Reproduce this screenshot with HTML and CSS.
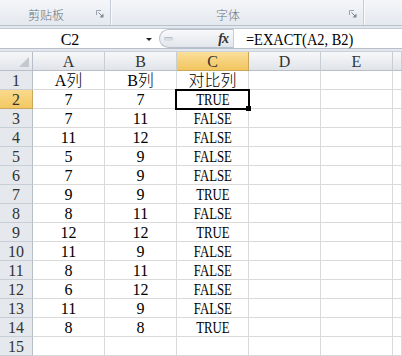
FILE: index.html
```html
<!DOCTYPE html>
<html lang="zh-CN">
<head>
  <meta charset="UTF-8" />
  <title>EXACT 对比</title>
  <link rel="stylesheet" href="styles.css">
</head>
<body>
  <div class="ribbon">
    <div class="group clip">
      <span class="label">剪贴板</span>
      <svg class="launcher" width="8" height="8" viewBox="0 0 8 8">
        <path d="M0.5 5V0.5H5" fill="none" stroke="#9aa4b0" />
        <path d="M2.5 2.5L6 6" stroke="#7d8895" />
        <path d="M3.5 7.5H7.5V3.5Z" fill="#7d8895" />
      </svg>
    </div>
    <div class="group font">
      <span class="label">字体</span>
      <svg class="launcher" width="8" height="8" viewBox="0 0 8 8">
        <path d="M0.5 5V0.5H5" fill="none" stroke="#9aa4b0" />
        <path d="M2.5 2.5L6 6" stroke="#7d8895" />
        <path d="M3.5 7.5H7.5V3.5Z" fill="#7d8895" />
      </svg>
    </div>
    <div class="group rest"></div>
  </div>

  <div class="fbar">
    <div class="namebox">
      <span class="name">C2</span>
      <span class="drop"></span>
    </div>
    <div class="fxbox">
      <span class="dimple"></span>
      <span class="fx">fx</span>
    </div>
    <div class="formula"><span class="ftext">=EXACT(A2, B2)</span></div>
  </div>

  <div class="sheet">
    <div class="corner">
      <svg width="10" height="10" viewBox="0 0 10 10"><path d="M10 0V10H0Z" fill="#c3c8cf" /></svg>
    </div>
    <div class="ch">A</div><div class="ch">B</div><div class="ch sel">C</div><div class="ch">D</div><div class="ch">E</div><div class="ch"></div>

    <div class="rh">1</div><div>A<span class="zh">列</span></div><div>B<span class="zh">列</span></div><div><span class="zh">对比列</span></div><div></div><div></div><div></div>
    <div class="rh sel">2</div><div>7</div><div>7</div><div class="act"><span class="b">TRUE</span><span class="handle"></span></div><div></div><div></div><div></div>
    <div class="rh">3</div><div>7</div><div>11</div><div><span class="b">FALSE</span></div><div></div><div></div><div></div>
    <div class="rh">4</div><div>11</div><div>12</div><div><span class="b">FALSE</span></div><div></div><div></div><div></div>
    <div class="rh">5</div><div>5</div><div>9</div><div><span class="b">FALSE</span></div><div></div><div></div><div></div>
    <div class="rh">6</div><div>7</div><div>9</div><div><span class="b">FALSE</span></div><div></div><div></div><div></div>
    <div class="rh">7</div><div>9</div><div>9</div><div><span class="b">TRUE</span></div><div></div><div></div><div></div>
    <div class="rh">8</div><div>8</div><div>11</div><div><span class="b">FALSE</span></div><div></div><div></div><div></div>
    <div class="rh">9</div><div>12</div><div>12</div><div><span class="b">TRUE</span></div><div></div><div></div><div></div>
    <div class="rh">10</div><div>11</div><div>9</div><div><span class="b">FALSE</span></div><div></div><div></div><div></div>
    <div class="rh">11</div><div>8</div><div>11</div><div><span class="b">FALSE</span></div><div></div><div></div><div></div>
    <div class="rh">12</div><div>6</div><div>12</div><div><span class="b">FALSE</span></div><div></div><div></div><div></div>
    <div class="rh">13</div><div>11</div><div>9</div><div><span class="b">FALSE</span></div><div></div><div></div><div></div>
    <div class="rh">14</div><div>8</div><div>8</div><div><span class="b">TRUE</span></div><div></div><div></div><div></div>
    <div class="rh">15</div><div></div><div></div><div></div><div></div><div></div><div></div>
  </div>
</body>
</html>
```

FILE: styles.css
```css
body {
  margin: 0;
  background: #e3e8ee;
  font-family: "Liberation Serif", "Noto Sans CJK SC", serif;
  overflow: hidden;
}

/* ribbon */
.ribbon {
  display: flex;
  height: 25px;
  background: linear-gradient(#f4f6f9, #e4e9ef);
  border-bottom: 1px solid #b9c1cb;
}

.group {
  display: flex;
  align-items: center;
  border-right: 1px solid #c6cdd6;
  box-shadow: 1px 0 0 #f7f9fb;
}

.clip {
  width: 110px;
}

.font {
  width: 252px;
}

.rest {
  flex: 1;
  border-right: none;
  box-shadow: none;
}

.label {
  flex: 1;
  text-align: center;
  font-family: "Noto Sans CJK SC", sans-serif;
  font-size: 12px;
  font-weight: 300;
  color: #6b7480;
  padding-top: 4px;
}

.launcher {
  margin: 3px 6px 0 4px;
}

/* formula bar */
.fbar {
  display: flex;
  height: 19px;
  margin-top: 2px;
  border-top: 1px solid #c2cad4;
  border-bottom: 1px solid #b7bfca;
  background: #fff;
}

.namebox {
  display: flex;
  align-items: center;
  width: 159px;
}

.name {
  width: 140px;
  text-align: center;
  font-size: 16px;
  line-height: 19px;
  padding-top: 1px;
}

.drop {
  width: 0;
  height: 0;
  margin: 2px 0 0 6px;
  border-left: 3px solid transparent;
  border-right: 3px solid transparent;
  border-top: 3px solid #222;
}

.fxbox {
  display: flex;
  align-items: center;
  width: 74px;
  box-sizing: border-box;
  border: 1px solid #b9c2cc;
  border-right: none;
  border-radius: 10px 0 0 10px;
  background: linear-gradient(#f8f9fb, #e2e6eb);
}

.dimple {
  width: 9px;
  height: 4px;
  margin-left: 4px;
  border-radius: 3px;
  background: #d9dee4;
  box-shadow: inset 0 1px 1px #b4bcc6;
}

.fx {
  margin-left: auto;
  margin-right: 5px;
  font-size: 14px;
  font-style: italic;
  font-weight: bold;
  color: #333;
  letter-spacing: -1px;
}

.formula {
  flex: 1;
  border-left: 1px solid #c7ced7;
  padding-left: 12px;
  font-size: 16px;
  line-height: 19px;
  white-space: nowrap;
}

.ftext {
  display: inline-block;
  transform: scaleX(0.9);
  transform-origin: left;
  padding-top: 1px;
}

/* sheet */
.sheet {
  display: grid;
  grid-template-columns: 33px repeat(5, 72px) 1fr;
  grid-auto-rows: 19px;
  margin-top: 2px;
  border-top: 1px solid #c9d0d8;
  background: #fff;
}

.sheet > div {
  box-sizing: border-box;
  border-right: 1px solid #dadada;
  border-bottom: 1px solid #dadada;
  text-align: center;
  font-size: 16px;
  line-height: 19px;
  white-space: nowrap;
  color: #000;
}

.zh {
  font-weight: 300;
}

.sheet > .corner {
  display: flex;
  align-items: flex-end;
  justify-content: flex-end;
  padding: 0 3px 3px 0;
  background: linear-gradient(#f6f7f9, #e1e5ea);
  border-right-color: #b8bfc8;
  border-bottom-color: #b8bfc8;
}

.sheet > .ch {
  background: linear-gradient(#f7f8fa, #e0e4e9);
  border-right-color: #c8ced6;
  border-bottom-color: #b8bfc8;
  color: #333;
}

.sheet > .rh {
  background: #e5e8ec;
  border-right-color: #b8bfc8;
  border-bottom-color: #c8ced6;
  color: #333;
}

.sheet > .ch.sel {
  background: linear-gradient(#fadf9b, #f2c55e);
  border-right-color: #c9a65a;
  border-bottom-color: #c9a65a;
}

.sheet > .rh.sel {
  background: linear-gradient(#f9da8c, #f3c863);
  border-right-color: #c9a65a;
  border-bottom-color: #c9a65a;
}

.b {
  display: inline-block;
  transform: scaleX(0.8);
}

.act {
  position: relative;
}

.act::after {
  content: "";
  position: absolute;
  left: -2px;
  top: -1px;
  right: -2px;
  bottom: -2px;
  border: 2px solid #000;
}

.handle {
  position: absolute;
  right: -3px;
  bottom: -3px;
  width: 5px;
  height: 5px;
  background: #000;
  z-index: 1;
}
```
